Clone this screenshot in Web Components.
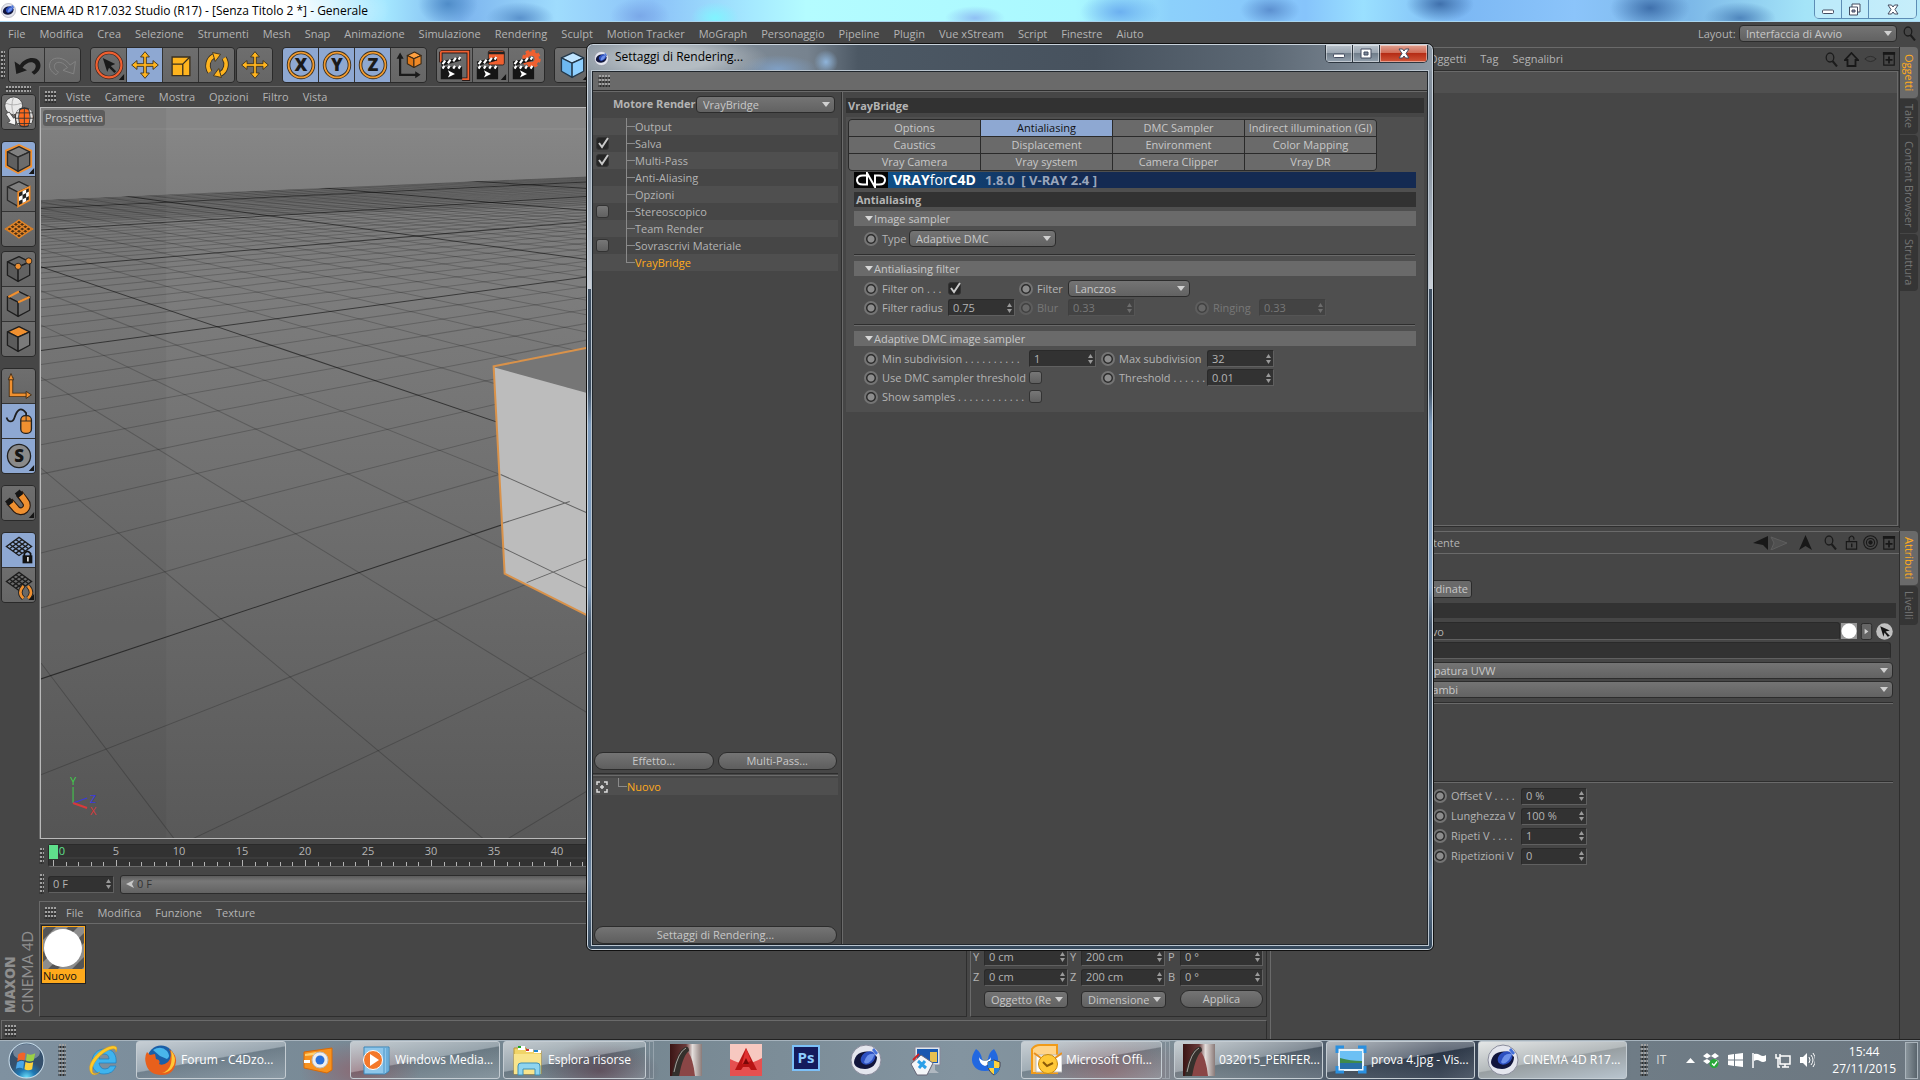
<!DOCTYPE html>
<html lang="it">
<head>
  <meta charset="UTF-8">
  <meta name="viewport" content="width=device-width, initial-scale=1.0">
  <title>CINEMA 4D R17.032 Studio (R17)</title>
  <style>
    html, body {
      height: 100%;
      margin: 0;
    }
    body {
      background: #464646;
      color: #b4b4b4;
      font: 11px/16px "Open Sans", "Noto Sans", sans-serif;
      overflow: hidden;
    }
  </style>
</head>
<body>
  <c4-desktop></c4-desktop>

  <template id="desktop">
    <style>
      :host { display: flex; flex-direction: column; height: 100vh; position: relative; }
      .menubar { display: flex; height: 23px; align-items: center; }
      .menubar c4-menu { flex: 1; }
      .menubar c4-combo { width: 199px; --lw: 41px; }
      .menubar c4-icon { margin: 0 3px 0 5px; }
      .work { flex: 1; display: flex; min-height: 0; }
      .left { flex: 1; display: flex; flex-direction: column; min-width: 0; }
      .right { flex: 0 0 649px; display: flex; flex-direction: column; gap: 3px; border-left: 1px solid #6a6a6a; padding-top: 2px; }
      .tools { display: flex; align-items: center; height: 41px; gap: 9px; box-sizing: border-box; padding-bottom: 2px; }
      .tools c4-grip { margin-right: -6px; }
      .tools .near { margin-left: -8px; }
      .body { flex: 1; display: flex; min-height: 0; }
      .side { flex: 0 0 36px; display: flex; flex-direction: column; gap: 11px; margin-right: 3px; padding-left: 1px; box-sizing: border-box; }
      .side c4-grip { margin: 0 0 -9px 4px; }
      .side .near { margin: -7px 0 0; }
      .brand { flex: 1; display: flex; align-items: flex-end; padding-bottom: 4px; color: #8e8e8e; }
      .brand span { writing-mode: vertical-rl; transform: rotate(180deg); line-height: 17px; font-size: 15px; font-family: Lato, sans-serif; }
      .brand b { font-family: "Open Sans", sans-serif; font-size: 14px; font-weight: 800; }
      .center { flex: 1; display: flex; flex-direction: column; min-width: 0; }
      c4-viewport { flex: 1; min-height: 0; }
      .bottom { display: flex; gap: 3px; height: 116px; }
      c4-materials { flex: 1; }
      c4-coords { flex: 0 0 297px; box-sizing: border-box; margin-right: 3px; }
      .status { height: 20px; margin: 3px 3px 0 1px; border: 1px solid #6a6a6a; border-right-color: #2e2e2e; border-bottom: 0; box-sizing: border-box; padding: 4px 2px; }
      c4-objects { flex: 481 0 0px; min-height: 0; }
      c4-attributes { flex: 509 0 0px; min-height: 0; }
      render-dialog { position: absolute; left: 586px; right: 486px; top: 43px; bottom: 129px; }
    </style>
    <title-bar></title-bar>
    <div class="menubar">
      <c4-menu style="padding-left: 1px">
        <button>File</button><button>Modifica</button><button>Crea</button><button>Selezione</button><button>Strumenti</button><button>Mesh</button><button>Snap</button><button>Animazione</button><button>Simulazione</button><button>Rendering</button><button>Sculpt</button><button>Motion Tracker</button><button>MoGraph</button><button>Personaggio</button><button>Pipeline</button><button>Plugin</button><button>Vue xStream</button><button>Script</button><button>Finestre</button><button>Aiuto</button>
      </c4-menu>
      <c4-combo label="Layout:" value="Interfaccia di Avvio"></c4-combo>
      <c4-icon name="search" size="15"></c4-icon>
    </div>
    <div class="work">
      <div class="left">
        <div class="tools">
          <c4-grip w="5" h="28"></c4-grip>
          <c4-tools items="undo redo"></c4-tools>
          <c4-tools items="select move* scale rotate"></c4-tools>
          <c4-tools class="near" items="move"></c4-tools>
          <c4-tools items="axisX* axisY* axisZ* world"></c4-tools>
          <c4-tools items="render renderView renderSet"></c4-tools>
          <c4-tools items="cube"></c4-tools>
        </div>
        <div class="body">
          <div class="side">
            <c4-grip w="26" h="6"></c4-grip>
            <c4-tools column items="convert"></c4-tools>
            <c4-tools column items="model* texture plane"></c4-tools>
            <c4-tools column class="near" items="points edges polys"></c4-tools>
            <c4-tools column items="axis mouse* solo*"></c4-tools>
            <c4-tools column items="magnet"></c4-tools>
            <c4-tools column items="gridLock* gridRot"></c4-tools>
            <div class="brand"><span><b>MAXON</b><br>CINEMA 4D</span></div>
          </div>
          <div class="center">
            <c4-viewport></c4-viewport>
            <c4-timeline></c4-timeline>
            <div class="bottom">
              <c4-materials></c4-materials>
              <c4-coords></c4-coords>
            </div>
          </div>
        </div>
        <div class="status"><c4-grip w="12" h="12"></c4-grip></div>
      </div>
      <div class="right">
        <c4-objects></c4-objects>
        <c4-attributes></c4-attributes>
      </div>
    </div>
    <task-bar></task-bar>
    <render-dialog></render-dialog>
  </template>

  <template id="title-bar">
    <style>
      :host {
        display: flex; height: 22px; box-sizing: border-box; border-bottom: 1px solid #a9d5ee; align-items: center; color: #000; font-size: 12px; padding: 0 3px 0 1px;
        background:
          radial-gradient(ellipse 250px 60px at 140px 10px, #fff 60%, #ffffff00),
          radial-gradient(ellipse 30px 22px at 448px 4px, #4f8cc8, #4f8cc800),
          radial-gradient(ellipse 34px 16px at 520px 18px, #5a92cc, #5a92cc00),
          radial-gradient(ellipse 30px 18px at 640px 16px, #7aa8e8, #7aa8e800),
          radial-gradient(ellipse 24px 16px at 715px 18px, #80f4ff, #80f4ff00),
          radial-gradient(ellipse 30px 12px at 975px 18px, #90c0f4, #90c0f400),
          radial-gradient(ellipse 40px 20px at 1120px 12px, #6cb0f0, #6cb0f000),
          radial-gradient(ellipse 30px 16px at 1270px 10px, #5c90d0, #5c90d000),
          radial-gradient(ellipse 34px 18px at 1440px 4px, #3f70ac, #3f70ac00),
          radial-gradient(ellipse 40px 22px at 1650px 8px, #3f70ac, #3f70ac00),
          radial-gradient(ellipse 36px 16px at 1740px 18px, #4f86bd, #4f86bd00),
          linear-gradient(90deg, #bfe3fb, #a5e8ff 20%, #7cb4ee 24%, #9fdcfd 29%, #8cc2f8 34%, #a4e8ff 39%, #b4fcff 42%, #aaf8ff 56%, #8cd0fb 61%, #86c4fb 68%, #9ae0ff 71%, #7cb8f4 76%, #8bc4fa 82%, #7cb8e8 88%, #a4e4f8 94%, #b4e8f8);
      }
      span { flex: 1; margin-left: 4px; }
      .btns { display: flex; align-self: flex-start; height: 18px; border: 1px solid #5d8db5; border-top: 0; border-radius: 0 0 5px 5px; }
      button { width: 27px; border: 0; border-right: 1px solid #5d8db5; background: #ffffff40; padding: 0; }
      button:last-child { width: 47px; border: 0; }
    </style>
    <c4-icon name="c4d" size="15"></c4-icon>
    <span>CINEMA 4D R17.032 Studio (R17) - [Senza Titolo 2 *] - Generale</span>
    <div class="btns">
      <button aria-label="Riduci"><c4-icon name="winMin" size="14"></c4-icon></button>
      <button aria-label="Ripristina"><c4-icon name="winRest" size="14"></c4-icon></button>
      <button aria-label="Chiudi"><c4-icon name="winClose" size="14"></c4-icon></button>
    </div>
  </template>

  <template id="viewport">
    <style>
      :host { display: flex; flex-direction: column; border: 1px solid #6a6a6a; border-right-color: #2e2e2e; border-bottom: 0; margin-right: 3px; }
      c4-menu { height: 20px; }
      .view { flex: 1; min-height: 0; position: relative; border: 1px solid #b9b9b9; border-width: 1px 0 1px 1px; overflow: hidden; background: linear-gradient(#868686 0, #868686 21px, #7c7c7c 100px, #7d7d7d 180px, #595959); }
      svg { position: absolute; width: 100%; height: 100%; }
      span { position: absolute; left: 2px; top: 2px; background: #5c5c5c; border-radius: 3px; padding: 0 2px; color: #c8c8c8; line-height: 16px; }
      text { font-size: 11px; }
    </style>
    <c4-menu grip>
      <button>Viste</button><button>Camere</button><button>Mostra</button><button>Opzioni</button><button>Filtro</button><button>Vista</button>
    </c4-menu>
    <div class="view">
      <svg viewBox="42 108 1226 729" preserveAspectRatio="xMinYMin slice"></svg>
      <span>Prospettiva</span>
    </div>
  </template>

  <template id="timeline">
    <style>
      :host { display: flex; flex-direction: column; padding: 5px 3px 7px 0; gap: 7px; }
      .row { display: flex; gap: 4px; align-items: center; }
      .ruler { flex: 1; height: 23px; background: #323232; border: 1px solid #2a2a2a; border-bottom-color: #6a6a6a; border-radius: 3px; box-sizing: border-box; }
      svg { display: block; overflow: visible; }
      text { font-size: 11px; fill: #b4b4b4; text-anchor: middle; }
      c4-field { width: 66px; --lw: 0px; --fw: 66px; }
      .slider { flex: 1; height: 17px; border: 1px solid #2c2c2c; border-radius: 3px; background: linear-gradient(#5c5c5c, #787878 30%, #636363); display: flex; align-items: center; gap: 3px; padding-left: 5px; color: #333; margin-left: 2px; }
    </style>
    <div class="row">
      <c4-grip w="5" h="16"></c4-grip>
      <div class="ruler"><svg width="1210" height="21"></svg></div>
    </div>
    <div class="row">
      <c4-grip w="5" h="20"></c4-grip>
      <c4-field name="Fotogramma" value="0 F"></c4-field>
      <div class="slider"><svg width="8" height="8"><path d="M0 4L8 0L6 4L8 8Z" fill="#c8c8c8"/></svg>0 F</div>
    </div>
  </template>

  <template id="materials">
    <style>
      :host { display: flex; flex-direction: column; border: 1px solid #6a6a6a; border-right-color: #2e2e2e; border-bottom-color: #2e2e2e; box-sizing: border-box; }
      c4-menu { height: 21px; border-bottom: 1px solid #6a6a6a; }
      figure { margin: 1px; width: 41px; border: 1px solid #222; background: #ffaa1c; padding: 1px; color: #111; line-height: 13px; }
      svg { display: block; }
    </style>
    <c4-menu grip><button>File</button><button>Modifica</button><button>Funzione</button><button>Texture</button></c4-menu>
    <figure>
      <svg width="41" height="42" viewBox="0 0 41 42">
        <path fill="#8d8d8d" d="M0 0h41v42H0z"/>
        <path stroke="#555" stroke-width="7" d="M-4 12L14-6M-4 34L34-4M6 46L46 6M28 48L46 30"/>
        <circle cx="20" cy="21" r="19" fill="#fff"/>
      </svg>
      <figcaption>Nuovo</figcaption>
    </figure>
  </template>

  <template id="coords">
    <style>
      :host { display: block; border: 1px solid #6a6a6a; border-right-color: #2e2e2e; border-bottom-color: #2e2e2e; padding: 46px 5px 0 2px; overflow: hidden; }
      .grid { display: grid; grid-template-columns: 97px 98px auto; row-gap: 2px; }
      c4-field { --lw: 11px; --fw: 84px; }
      c4-field:nth-child(3n) { --lw: 12px; --fw: 83px; }
      c4-combo { margin: 2px 2px 0 11px; }
      c4-button { margin: 2px 0 0 12px; }
    </style>
    <div class="grid">
      <c4-field label="Y" value="0 cm"></c4-field>
      <c4-field label="Y" value="200 cm"></c4-field>
      <c4-field label="P" value="0 °"></c4-field>
      <c4-field label="Z" value="0 cm"></c4-field>
      <c4-field label="Z" value="200 cm"></c4-field>
      <c4-field label="B" value="0 °"></c4-field>
      <c4-combo name="Sistema" value="Oggetto (Rel)"></c4-combo>
      <c4-combo name="Misura" value="Dimensione"></c4-combo>
      <c4-button>Applica</c4-button>
    </div>
  </template>

  <template id="objects">
    <style>
      :host { display: flex; }
      .panel { flex: 1; display: flex; flex-direction: column; border-top: 1px solid #6a6a6a; border-bottom: 1px solid #2e2e2e; margin-bottom: 1px; }
      .bar { display: flex; height: 22px; align-items: center; justify-content: space-between; padding: 0 3px 0 151px; border-bottom: 1px solid #2e2e2e; }
      .icons { display: flex; gap: 5px; }
      .list { flex: 1; border-top: 1px solid #6a6a6a; border-right: 1px solid #6a6a6a; border-bottom: 1px solid #6a6a6a; margin-right: 1px; background: linear-gradient(#505050 21px, #464646 21px); }
    </style>
    <div class="panel">
      <div class="bar">
        <c4-menu><button>Oggetti</button><button>Tag</button><button>Segnalibri</button></c4-menu>
        <div class="icons"><c4-icon name="search" size="15"></c4-icon><c4-icon name="home" size="15"></c4-icon><c4-icon name="eye" size="13"></c4-icon><c4-icon name="plus" size="14"></c4-icon></div>
      </div>
      <div class="list"></div>
    </div>
    <c4-rail items="Oggetti*51 Take*35 Content_Browser*98 Struttura*57"></c4-rail>
  </template>

  <template id="attributes">
    <style>
      :host { display: flex; }
      .panel { flex: 1; display: flex; flex-direction: column; border-top: 1px solid #6a6a6a; min-width: 0; }
      .bar { display: flex; height: 21px; align-items: center; justify-content: space-between; padding: 0 3px 0 147px; border-bottom: 1px solid #6a6a6a; }
      .icons { display: flex; gap: 4px; align-items: center; }
      .wide { margin-left: 6px; }
      .lock { margin-left: 2px; }
      .content { padding: 26px 6px 0 120px; display: flex; flex-direction: column; }
      .tab { align-self: flex-start; height: 18px; width: 81px; box-sizing: border-box; font: inherit; line-height: 14px; padding: 0 3px; text-align: right; color: #c8c8c8; background: #6a6a6a; border: 1px solid #2a2a2a; border-radius: 3px; }
      .head { height: 15px; background: #323232; margin: 5px -3px 4px 0; }
      .link { display: flex; align-items: center; gap: 1px; }
      input { flex: 1; min-width: 0; height: 18px; box-sizing: border-box; border: 1px solid #2a2a2a; border-bottom-color: #606060; border-radius: 3px; background: #323232; color: #b4b4b4; font: inherit; padding: 0 18px; }
      .tex { flex: none; height: 17px; margin: 2px 2px 2px 0; }
      c4-combo { margin: 0 0 1px; --cp: 19px; }
      hr { border: 0; border-top: 1px solid #2e2e2e; border-bottom: 1px solid #6a6a6a; margin: 3px 0 77px; width: 100%; }
      .rows { margin: 4px 0 0 42px; display: grid; gap: 2px; --lw: 70px; --fw: 66px; }
      hr.low { margin: 0; }
    </style>
    <div class="panel">
      <div class="bar">
        <c4-menu><button>Utente</button></c4-menu>
        <div class="icons"><c4-icon name="back" size="35"></c4-icon><c4-icon class="wide" name="up" size="15"></c4-icon><c4-icon class="wide" name="search" size="15"></c4-icon><c4-icon class="lock" name="lock" size="15"></c4-icon><c4-icon name="target" size="15"></c4-icon><c4-icon name="plus" size="14"></c4-icon></div>
      </div>
      <div class="content">
        <button class="tab">Coordinate</button>
        <div class="head"></div>
        <div class="link"><input aria-label="Materiale" value="Nuovo"><c4-icon name="sphere" size="16"></c4-icon><c4-icon name="next" size="17"></c4-icon><c4-icon name="pick" size="17"></c4-icon></div>
        <input class="tex" aria-label="Selezione">
        <c4-combo name="Proiezione" value="Mappatura UVW"></c4-combo>
        <c4-combo name="Lato" value="Entrambi"></c4-combo>
        <hr>
        <hr class="low">
        <div class="rows">
          <c4-field knob label="Offset V . . . ." value="0 %"></c4-field>
          <c4-field knob label="Lunghezza V" value="100 %"></c4-field>
          <c4-field knob label="Ripeti V . . . ." value="1"></c4-field>
          <c4-field knob label="Ripetizioni V" value="0"></c4-field>
        </div>
      </div>
    </div>
    <c4-rail items="Attributi*54 Livelli*39"></c4-rail>
  </template>

  <template id="dialog">
    <style>
      :host {
        display: flex; flex-direction: column; box-sizing: border-box; border: 1px solid #111; border-radius: 7px 7px 6px 6px; padding: 0 5px 5px; box-shadow: inset 0 0 0 1px #c9d3dc;
        background: linear-gradient(#8f9aa6, #76828f 9%, #a8b2be 20%, #c9ced6 27%, #405062 27%, #405062 38%, #7d9bbd 42%, #7d9bbd 60%, #4b5c70 64%, #3a4a5a 80%, #6b84a0 92%, #34475a);
      }
      header { display: flex; height: 26px; align-items: center; margin: 1px -4px 0; padding: 0 4px 0 6px; color: #000; font-size: 12px; line-height: 14px; border-radius: 6px 6px 0 0;
        background: radial-gradient(ellipse 100px 26px at 80px 14px, #b4bcc2 40%, #b4bcc200), radial-gradient(circle 12px at 238px 17px, #8fb4da, #8fb4da00), radial-gradient(ellipse 40px 14px at 190px 24px, #7f9fc4, #7f9fc400), linear-gradient(90deg, #8a95a0, #77838f 26%, #4c5864 32%, #47525e 60%, #5c6874 80%, #8d98a4); }
      header span { flex: 1; margin: 0 0 2px 6px; }
      .btns { display: flex; align-self: flex-start; height: 17px; border: 1px solid #2d3640; border-top: 0; border-radius: 0 0 5px 5px; overflow: hidden; }
      .btns button { width: 27px; border: 0; border-right: 1px solid #2d3640; background: linear-gradient(#b9c2cb, #98a3ae 50%, #717e8b 50%, #93a0ad); padding: 0; box-shadow: inset 0 0 0 1px #ffffff70; }
      .btns button:last-child { width: 47px; border: 0; background: linear-gradient(#e0a090, #cf6a55 48%, #b52c15 50%, #d0563a); }
      main { flex: 1; min-height: 0; display: flex; flex-direction: column; border: 1px solid #20262c; outline: 1px solid #b9c4ce; background: #464646; }
      .strip { height: 18px; background: #6a6a6a; border-bottom: 1px solid #2e2e2e; padding-left: 5px; display: flex; align-items: center; }
      .cols { flex: 1; min-height: 0; display: flex; border-top: 1px solid #6a6a6a; }
      .nav { flex: 0 0 249px; display: flex; flex-direction: column; border-right: 1px solid #2e2e2e; box-sizing: border-box; padding-right: 3px; }
      .engine { margin: 3px 3px 5px 20px; --lw: 83px; --lb: bold; }
      ul { list-style: none; margin: 0; padding: 0; }
      li { display: flex; height: 17px; align-items: center; }
      li:nth-child(odd) { background: #4f4f4f; }
      li c4-check { width: 33px; padding-left: 3px; box-sizing: border-box; }
      li i { align-self: stretch; width: 9px; border-left: 1px solid #8a8a8a; box-sizing: border-box; background: linear-gradient(#8a8a8a, #8a8a8a) 0 8px / 100% 1px no-repeat; }
      li:last-child i { border-image: linear-gradient(#8a8a8a 9px, transparent 9px) 1; }
      li.on { color: #ffaa1c; }
      .grow { flex: 481 0 0px; }
      .grow.small { flex-grow: 131; }
      .two { display: grid; grid-template-columns: 1fr 1fr; gap: 4px; padding: 0 1px 3px; }
      .line { height: 1px; border-top: 1px solid #2e2e2e; border-bottom: 1px solid #6a6a6a; margin-bottom: 2px; }
      .preset i { width: 9px; margin: 0 0 0 10px; }
      .preset c4-icon { margin-left: 3px; }
      .view { flex: 1; min-width: 0; border-left: 1px solid #6a6a6a; padding: 6px 3px 0 3px; }
      h2, h3, h4 { margin: 0; font-size: 11px; line-height: 15px; height: 15px; background: #323232; }
      h2 { padding-left: 2px; margin-bottom: 4px; }
      h3 { padding-left: 2px; margin: 4px 0; }
      h4 { background: #6a6a6a; color: #c8c8c8; font-weight: normal; padding-left: 11px; display: flex; align-items: center; gap: 1px; }
      h4::before { content: ""; border: 4px solid transparent; border-top: 5px solid #d8d8d8; border-bottom: 0; }
      .box { background: #4f4f4f; padding: 2px 0 6px 2px; }
      .tabs { display: grid; grid-template-columns: repeat(4, 131px); gap: 1px; width: max-content; background: #2a2a2a; border: 1px solid #2a2a2a; border-radius: 4px; overflow: hidden; }
      .tabs button { height: 16px; border: 0; padding: 0; background: #6a6a6a; color: #c8c8c8; font: inherit; line-height: 16px; white-space: nowrap; }
      .tabs button.on { background: #8ea8d2; color: #111; }
      .in { margin: 1px 8px 0 6px; }
      .banner { display: flex; align-items: center; height: 16px; background: linear-gradient(90deg, #0f4f87 34px, #142a52 220px); color: #9aa6bc; font: bold 13px/16px "Open Sans", sans-serif; white-space: pre; }
      .banner c4-icon { margin-right: 5px; }
      .banner em { font-style: normal; font-size: 14px; color: #fff; margin-right: 9px; }
      .banner em span { font-weight: normal; }
      .rows { display: grid; padding: 3px 0 0 10px; grid-auto-rows: 19px; align-items: center; }
      .sampler { --lw: 27px; grid-template-columns: 192px; }
      .filter { grid-template-columns: 155px 176px auto; --fw: 67px; --lw: 66px; padding-bottom: 1px; }
      .filter .c2 { --lw: 31px; }
      .filter .c3 { --lw: 46px; }
      .filter c4-combo { width: 171px; }
      .dmc { grid-template-columns: 237px auto; --lw: 147px; --fw: 67px; }
      .dmc .c2 { --lw: 88px; }
      .sep { border-top: 1px solid #2e2e2e; border-bottom: 1px solid #6a6a6a; margin: 6px 1px 5px 0; }
    </style>
    <header>
      <c4-icon name="c4d" size="15"></c4-icon>
      <span>Settaggi di Rendering...</span>
      <div class="btns">
        <button aria-label="Riduci"><c4-icon name="winMin" size="14"></c4-icon></button>
        <button aria-label="Ingrandisci"><c4-icon name="winMax" size="14"></c4-icon></button>
        <button aria-label="Chiudi"><c4-icon name="winClose" size="14"></c4-icon></button>
      </div>
    </header>
    <main>
      <div class="strip"><c4-grip w="12" h="12"></c4-grip></div>
      <div class="cols">
        <div class="nav">
          <c4-combo class="engine" label="Motore Render" value="VrayBridge"></c4-combo>
          <ul>
            <li><c4-check hide></c4-check><i></i>Output</li>
            <li><c4-check name="Salva" checked></c4-check><i></i>Salva</li>
            <li><c4-check name="Multi-Pass" checked></c4-check><i></i>Multi-Pass</li>
            <li><c4-check hide></c4-check><i></i>Anti-Aliasing</li>
            <li><c4-check hide></c4-check><i></i>Opzioni</li>
            <li><c4-check name="Stereoscopico"></c4-check><i></i>Stereoscopico</li>
            <li><c4-check hide></c4-check><i></i>Team Render</li>
            <li><c4-check name="Sovrascrivi Materiale"></c4-check><i></i>Sovrascrivi Materiale</li>
            <li class="on"><c4-check hide></c4-check><i></i>VrayBridge</li>
          </ul>
          <div class="grow"></div>
          <div class="two"><c4-button>Effetto...</c4-button><c4-button>Multi-Pass...</c4-button></div>
          <div class="line"></div>
          <ul class="preset"><li class="on"><c4-icon name="focus" size="12"></c4-icon><i></i>Nuovo</li></ul>
          <div class="grow small"></div>
          <c4-button style="margin: 0 1px">Settaggi di Rendering...</c4-button>
        </div>
        <div class="view">
          <h2>VrayBridge</h2>
          <div class="box">
            <div class="tabs">
              <button>Options</button><button class="on">Antialiasing</button><button>DMC Sampler</button><button>Indirect illumination (GI)</button>
              <button>Caustics</button><button>Displacement</button><button>Environment</button><button>Color Mapping</button>
              <button>Vray Camera</button><button>Vray system</button><button>Camera Clipper</button><button>Vray DR</button>
            </div>
            <div class="in">
              <div class="banner"><c4-icon name="cnd" size="34"></c4-icon><em>VRAY<span>for</span>C4D</em>1.8.0  [ V-RAY 2.4 ]</div>
              <h3>Antialiasing</h3>
              <h4>Image sampler</h4>
              <div class="rows sampler"><c4-combo knob label="Type" value="Adaptive DMC"></c4-combo></div>
              <div class="sep"></div>
              <h4>Antialiasing filter</h4>
              <div class="rows filter">
                <c4-check knob label="Filter on . . ." checked></c4-check>
                <c4-combo class="c2" knob label="Filter" value="Lanczos"></c4-combo>
                <span></span>
                <c4-field knob label="Filter radius" value="0.75"></c4-field>
                <c4-field class="c2" knob off label="Blur" value="0.33"></c4-field>
                <c4-field class="c3" knob off label="Ringing" value="0.33"></c4-field>
              </div>
              <div class="sep"></div>
              <h4>Adaptive DMC image sampler</h4>
              <div class="rows dmc">
                <c4-field knob label="Min subdivision . . . . . . . . . ." value="1"></c4-field>
                <c4-field class="c2" knob label="Max subdivision" value="32"></c4-field>
                <c4-check knob label="Use DMC sampler threshold"></c4-check>
                <c4-field class="c2" knob label="Threshold . . . . . ." value="0.01"></c4-field>
                <c4-check knob label="Show samples . . . . . . . . . . . ."></c4-check>
              </div>
            </div>
          </div>
        </div>
      </div>
    </main>
  </template>

  <template id="taskbar">
    <style>
      :host { display: flex; align-items: center; height: 40px; box-sizing: border-box; border-top: 1px solid #a6b3bd; outline: 1px solid #222; color: #fff; font-size: 12px; padding: 0 2px 1px 8px;
        background: radial-gradient(ellipse 60px 30px at 360px 30px, #8a6a74, transparent), radial-gradient(ellipse 60px 30px at 600px 30px, #5a4a58, transparent), radial-gradient(ellipse 80px 40px at 1110px 30px, #8a7078, transparent), linear-gradient(90deg, #7f91a0, #74858f 30%, #8394a0 50%, #7e8d96 62%, #2e3a4c 75%, #6f7c86 85%, #6c7780 100%); }
      .start { border: 0; padding: 0; background: none; }
      .q1 { margin: 0 16px 0 22px; }
      .q2 { margin: 0 16px; }
      .more { width: 3px; height: 36px; border: 1px solid #c8d0d666; border-left: 0; }
      .apps { display: flex; gap: 28px; margin: 0 19px 0 16px; }
      .tray { display: flex; align-items: center; margin-left: auto; }
      .tray c4-icon { margin-left: 8px; }
      .it { margin-right: 12px; color: #ddd; }
      .clock { text-align: center; line-height: 17px; margin: 0 9px 0 17px; }
      .show { width: 13px; height: 37px; padding: 0; border: 1px solid #aab4bb; background: linear-gradient(90deg, #8a959c, #59646c); }
    </style>
    <button class="start" aria-label="Start"><c4-icon name="start" size="37"></c4-icon></button>
    <c4-grip w="8" h="32" style="margin-left: 13px"></c4-grip>
    <c4-icon class="q1" name="ie" size="32"></c4-icon>
    <task-button icon="firefox" style="width: 150px">Forum - C4Dzo...</task-button>
    <c4-icon class="q2" name="camera" size="32"></c4-icon>
    <task-button icon="wmp" style="width: 150px; margin-right: 3px">Windows Media...</task-button>
    <task-button icon="folder" style="width: 143px">Esplora risorse</task-button>
    <span class="more"></span><span class="more"></span>
    <div class="apps">
      <c4-icon name="archicad" size="32"></c4-icon><c4-icon name="autocad" size="32"></c4-icon><c4-icon name="ps" size="32"></c4-icon><c4-icon name="c4d" size="32"></c4-icon><c4-icon name="remote" size="32"></c4-icon><c4-icon name="malware" size="32"></c4-icon>
    </div>
    <task-button icon="outlook" style="width: 141px">Microsoft Offi...</task-button>
    <span class="more"></span><span class="more"></span>
    <task-button icon="archicad" style="width: 149px; margin: 0 3px 0 4px">032015_PERIFER...</task-button>
    <task-button icon="photo" style="width: 149px; margin-right: 3px">prova 4.jpg - Vis...</task-button>
    <task-button icon="c4d" on style="width: 149px">CINEMA 4D R17...</task-button>
    <c4-grip w="8" h="32" style="margin-left: 13px"></c4-grip>
    <div class="tray">
      <span class="it">IT</span>
      <c4-icon name="tri" size="9"></c4-icon><c4-icon name="dropbox" size="16"></c4-icon><c4-icon name="win" size="16"></c4-icon><c4-icon name="flag" size="16"></c4-icon><c4-icon name="net" size="16"></c4-icon><c4-icon name="vol" size="16"></c4-icon>
      <div class="clock">15:44<br>27/11/2015</div>
      <button class="show" aria-label="Mostra desktop"></button>
    </div>
  </template>

  <script>
    const cube = (top, side, front, line, w = 1.5) => `
      <g stroke="${line}" stroke-width="${w}" stroke-linejoin="round">
        <path fill="${top}" d="M5 10L18 4L30 10L17 16Z"/>
        <path fill="${side}" d="M5 10L17 16V32L5 25Z"/>
        <path fill="${front}" d="M17 16L30 10V25L17 32Z"/>
      </g>`
    const arrows = '<path d="M18 3l5 6h-3.500v7.500H27V13l6 5-6 5v-3.500h-7.500V27H23l-5 6-5-6h3.500v-7.500H9V23l-6-5 6-5v3.500h7.500V9H13z" fill="#ffb41e" stroke="#3a3020"/>'
    const axisBtn = (l) => `<circle cx="18" cy="18" r="14" fill="none" stroke="#3a3020" stroke-width="4"/><circle cx="18" cy="18" r="14" fill="none" stroke="#f09a30" stroke-width="2"/><text x="18" y="25" text-anchor="middle" font-size="20" font-weight="800" font-family="Open Sans" fill="#1a1a1a">${l}</text>`
    const clapper = `<path d="M2 20h24v14H2z" fill="#151515"/><path d="M2 14l22-5 1 4-22 6z" fill="#151515"/><path d="M4 17l3-4M10 16l3-4M16 14l3-4M22 12l2-3M4 22l2-3M10 22l2-3M16 22l2-3M22 22l2-3" stroke="#fff" stroke-width="2.500"/><path d="M10 24l8 4-8 4 2-4z" fill="#fff"/>`
    const lattice = (c) => `<g transform="translate(18 14) scale(1 .72)"><g transform="rotate(45)" fill="none" stroke="${c}" stroke-width="1.800"><rect x="-10" y="-10" width="20" height="20"/><path d="M-5-10v20M0-10v20M5-10v20M-10-5h20M-10 0h20M-10 5h20"/></g></g>`
    const corner = '<path d="M35 28v7h-6z" fill="#151515"/>'
    const undoPath = 'M4 14l2 14 12-4-5-3c4-6 11-8 14-4 2 3 0 7-4 9l3 3c6-4 9-9 6-15-4-6-16-5-22 4z'

    // name: [viewBox width, height, markup]
    const icons = {
      undo: [36, 36, `<path d="${undoPath}" fill="#1c1c1c"/>`],
      redo: [36, 36, `<path d="${undoPath}" transform="matrix(-1 0 0 1 36 0)" fill="none" stroke="#868686"/>`],
      select: [36, 36, '<circle cx="18" cy="18" r="14" fill="none" stroke="#3a2420" stroke-width="4"/><circle cx="18" cy="18" r="14" fill="none" stroke="#f06030" stroke-width="2.500"/><path d="M11 10l14 7-5 2 6 6-2 2-6-6-2 5z" fill="#1a1a1a"/>' + corner],
      move: [36, 36, arrows],
      scale: [36, 36, '<path d="M8 9h20v21H8z" fill="#ffb41e" stroke="#3a3020" stroke-width="1.500"/><path d="M8 17h12v13M20 17l8-8" fill="none" stroke="#3a3020" stroke-width="1.500"/>'],
      rotate: [36, 36, '<g fill="none" stroke="#3a3020" stroke-width="6"><path d="M10 26a11 12 0 0 1 4-18M26 10a11 12 0 0 1-4 18"/></g><g fill="none" stroke="#ffb41e" stroke-width="4"><path d="M10 26a11 12 0 0 1 4-18M26 10a11 12 0 0 1-4 18"/></g><path d="M13 4l9 2-6 8zM23 32l-9-2 6-8z" fill="#ffb41e" stroke="#3a3020"/>'],
      axisX: [36, 36, axisBtn('X')],
      axisY: [36, 36, axisBtn('Y')],
      axisZ: [36, 36, axisBtn('Z')],
      world: [36, 36, `<path d="M8 30V9M7 29h20" stroke="#1a1a1a" stroke-width="2.500"/><path d="M4 11l4-7 4 7zM25 25l6 4-6 4z" fill="#1a1a1a"/><g transform="translate(13 1) scale(.62)">${cube('#ffa040', '#e07818', '#f08a28', '#3a2a18', 2)}</g>`],
      render: [36, 36, '<path d="M2 3h31v31H26M2 3v12" fill="none" stroke="#2a1a18" stroke-width="4"/><path d="M2 3h31v31H26M2 3v12" fill="none" stroke="#f06030" stroke-width="2"/>' + clapper],
      renderView: [36, 36, '<rect x="15" y="2" width="18" height="16" rx="2" fill="#f06030" stroke="#222"/><path d="M15 3h18v3H15z" fill="#222"/>' + clapper + corner],
      renderSet: [36, 36, '<circle cx="23" cy="11" r="6" fill="none" stroke="#f06030" stroke-width="5"/><circle cx="23" cy="11" r="9" fill="none" stroke="#f06030" stroke-width="3" stroke-dasharray="4 3.070"/>' + clapper],
      cube: [36, 36, cube('#bfe4ff', '#6db8f0', '#8fd0ff', '#24384a') + corner],
      convert: [36, 36, '<circle cx="12" cy="11" r="10" fill="#e8e8e8" stroke="#444"/><path d="M3 8q9 4 18 0M12 1q-4 10 0 20" fill="none" stroke="#aaa"/><path d="M3 20l4-2 5 7 3-2-1 10-9-3 3-2z" fill="#f4f4f4" stroke="#444"/><ellipse cx="24" cy="24" rx="10" ry="10.500" fill="#ff6a1e" stroke="#333" stroke-width="1.500"/><path d="M16 17q-3 7 0 14l3 3q-2-9 0-20zM32 17q3 7 0 14l-3 3q2-9 0-20z" fill="#ddd"/><path d="M15 19h18M14 25h20M16 31h16M19 14q-3 10 0 20M24 13v22M29 14q3 10 0 20" fill="none" stroke="#333"/>'],
      model: [36, 36, '<path d="M4 9L18 3L31 9V26L17 33L4 26Z" fill="none" stroke="#f09030" stroke-width="3.500"/>' + cube('#808080', '#606060', '#6c6c6c', '#2a2a2a') + corner],
      texture: [36, 36, cube('#808080', '#6c6c6c', '#fff', '#2a2a2a') + '<path d="M18 16l4-2v5l-4 2zM26 12l4-2v5l-4 2zM22 19l4-2v5l-4 2zM18 26l4-2v5l-4 2zM26 22l4-2v4l-4 2z" fill="#222"/><path d="M17 16l13-6v15l-13 7z" fill="none" stroke="#f09030" stroke-width="2"/>'],
      plane: [36, 36, `<path d="M2 18L18 8L34 18L18 28Z" fill="#4a2f14" stroke="#e08428"/><g transform="translate(0 4)">${lattice('#e08428')}</g>`],
      points: [36, 36, cube('#666', '#5a5a5a', '#626262', '#1e1e1e') + '<g fill="#f09030" stroke="#222"><circle cx="17" cy="15" r="3.500"/><circle cx="29" cy="9" r="3.500"/></g>'],
      edges: [36, 36, cube('#707070', '#606060', '#6c6c6c', '#1e1e1e') + '<path d="M6 10l12-6M17 16l13-6" stroke="#f09030" stroke-width="2.500"/>'],
      polys: [36, 36, cube('#f09030', '#5c5c5c', '#7a7a7a', '#1e1e1e')],
      axis: [36, 36, '<path d="M9 8v20h19" fill="none" stroke="#3a2a18" stroke-width="5"/><path d="M9 6v22h20" fill="none" stroke="#f09030" stroke-width="3"/><path d="M6 11l3-7 3 7zM26 24l6 4-6 4z" fill="#f09030" stroke="#3a2a18"/>'],
      mouse: [36, 36, '<path d="M4 14c2 6 7 6 9 0s6-14 13-5v4" fill="none" stroke="#1e1e1e" stroke-width="2"/><rect x="20" y="12" width="12" height="20" rx="5" fill="#f09030" stroke="#222" stroke-width="1.500"/><path d="M20 18h12M26 12v6" stroke="#222"/>'],
      solo: [36, 36, '<circle cx="18" cy="18" r="13" fill="#8a8a8a" stroke="#222" stroke-width="1.500"/><text x="18" y="25" text-anchor="middle" font-size="19" font-weight="800" font-family="Open Sans" fill="#151515">S</text>' + corner],
      magnet: [36, 36, '<g fill="none"><path d="M7 16l8 9a6 6 0 0 0 10-9l-7-9" stroke="#2a1a10" stroke-width="9"/><path d="M9 18l6 7a6 6 0 0 0 10-9l-5-7" stroke="#f09030" stroke-width="6.500"/><path d="M5 14l4 5M16 5l4 5" stroke="#151515" stroke-width="7"/></g>' + corner],
      gridLock: [36, 36, lattice('#1c1c1c') + '<rect x="22" y="24" width="11" height="9" fill="#111"/><path d="M24 25v-3q3.500-5 7 0v3" fill="none" stroke="#111" stroke-width="2"/><path d="M27 26h2v5h-2z" fill="#ddd"/>'],
      gridRot: [36, 36, lattice('#1c1c1c') + '<path d="M23 33q-7-6 0-14M28 33q7-6 0-14" fill="none" stroke="#222" stroke-width="5"/><path d="M23 33q-7-6 0-14M28 33q7-6 0-14" fill="none" stroke="#f09030" stroke-width="3"/>' + corner],
      search: [15, 15, '<ellipse cx="6" cy="5.500" rx="3.800" ry="4.500" fill="none" stroke="#1c1c1c" stroke-width="1.300"/><path d="M8.500 9l4.500 5.500" stroke="#1c1c1c" stroke-width="2"/>'],
      home: [15, 15, '<path d="M7.500 1L14 8h-2.500v6h-8V8H1z" fill="none" stroke="#181818" stroke-width="1.800"/>'],
      eye: [15, 15, '<path d="M1 8q6.500-6 13 0q-6.500 6-13 0z" fill="none" stroke="#2a2a2a"/>'],
      plus: [14, 16, '<path d="M1 2h12v13H1z" fill="none" stroke="#181818" stroke-width="1.300"/><path d="M0 0h14v3H0zM6 5h2v8H6zM3 8h8v2H3z" fill="#181818"/>'],
      back: [35, 14, '<path d="M0 7L15 0V14L10 9z" fill="#181818"/><path d="M18 1l16 6-16 7 3-7z" fill="#505050" stroke="#5e5e5e"/>'],
      up: [13, 15, '<path d="M6.500 0L13 15l-6.500-4L0 15z" fill="#181818"/>'],
      lock: [13, 16, '<path d="M1 7h11v8H1zM4 7V3q3-4 5 0v2" fill="none" stroke="#181818" stroke-width="1.200"/><path d="M6 9h1.500v4H6z" fill="#181818"/>'],
      target: [14, 14, '<g fill="none" stroke="#181818"><circle cx="7" cy="7" r="6.300"/><circle cx="7" cy="7" r="3.800"/></g><circle cx="7" cy="7" r="2" fill="#181818"/>'],
      sphere: [16, 16, '<path d="M0 0h16v16H0z" fill="#999"/><circle cx="8" cy="8" r="7.500" fill="#fff"/>'],
      next: [12, 18, '<rect x=".5" y=".5" width="11" height="17" rx="2" fill="#666" stroke="#2a2a2a"/><path d="M4 6l4 3-4 3z" fill="#d0d0d0"/>'],
      pick: [16, 16, '<circle cx="8" cy="8" r="7.800" fill="#c0c0c0"/><path d="M4 3l9 4-4 1 4 4-2 1-3-4-1 4z" fill="#151515"/>'],
      focus: [12, 12, '<path d="M1 4V1h3M8 1h3v3M11 8v3H8M4 11H1V8M6 4v4M4 6h4" fill="none" stroke="#ddd" stroke-width="1.500"/>'],
      winMin: [14, 14, '<rect x="1.500" y="7" width="11" height="3.500" rx="1" fill="#fff" stroke="#444c60"/>'],
      winMax: [14, 14, '<path d="M2 2h10v9H2z" fill="#fff" stroke="#444c60"/><path d="M5 5h4v3H5z" fill="#7b8798" stroke="#444c60"/>'],
      winRest: [14, 14, '<path d="M4 1h8v8H4z" fill="#fff" stroke="#444c60"/><path d="M1.500 4h8v8h-8z" fill="#fff" stroke="#444c60"/><path d="M4 7h3v2H4z" fill="#99b" stroke="#444c60"/>'],
      winClose: [14, 14, '<path d="M2 2h3.500L7 4l1.500-2H12L9 6.500 12 11H8.500L7 9l-1.500 2H2l3-4.500z" fill="#fff" stroke="#444c60"/>'],
      c4d: [32, 32, '<circle cx="16" cy="16" r="15" fill="#e4e6ee" stroke="#8a8c9c"/><path d="M4 18C5 9 13 6 22 8l5 5c0 7-5 12-12 12C8 25 4 22 4 18z" fill="#11153c"/><ellipse cx="18" cy="14" rx="8" ry="6" transform="rotate(-35 18 14)" fill="#2c4fc0"/><path d="M14 18q2 4 8-2l3-6q-8-2-11 8z" fill="#6c90ea"/><path d="M24 4l4 5-2 2-4-5z" fill="#4470d8"/>'],
      cnd: [34, 16, '<path d="M0 0h34v16H0z" fill="#050505"/><g fill="none" stroke="#fff" stroke-width="2"><path d="M14 3.500H9q-6 0-6 4.500t6 4.500h4V1l8 14V3.500h4q6 0 6 4.500t-6 4.500h-5"/></g>'],
      start: [36, 36, '<defs><radialGradient id="g" cy="1"><stop offset="0" stop-color="#6fe6ff"/><stop offset=".5" stop-color="#1e78b4"/><stop offset="1" stop-color="#35506c"/></radialGradient></defs><circle cx="18" cy="18" r="17" fill="url(#g)" stroke="#c8dcea"/><ellipse cx="18" cy="10" rx="13" ry="8" fill="#fff" opacity=".3"/><path d="M10 12q4-3 7-1l-1 7q-4-2-7 1z" fill="#f0642a"/><path d="M18.500 11.500q4 2 8-.500l-1.500 7q-4 2-7.500 0z" fill="#9ad046"/><path d="M8.700 20q4-3 7-1l-1 7q-3-2-7 0z" fill="#4aa6e8"/><path d="M17 19.500q4 2 7.500 0l-1 7q-4 2-7.500 0z" fill="#ffd23c"/>'],
      ie: [32, 32, '<path d="M28 19H11q1 6 6 6 4 0 5-3h6q-3 8-12 8C8 30 4 25 4 18S9 5 17 5s12 6 11 14zM11 15h10q0-5-5-5t-5 5z" fill="#3fb4ee" stroke="#1c7fc0" stroke-width=".7"/><path d="M3 29C-3 20 12 4 24 2q7-1 4 6 0-4-4-3C14 7 1 22 5 29q3 2 7-1-6 5-9 1z" fill="#ffc928" stroke="#d89a10" stroke-width=".5"/>'],
      firefox: [32, 32, '<circle cx="16" cy="15" r="13.500" fill="#1a5fa8"/><path d="M8 6q8-5 14 1 4 5 0 8l-7-3z" fill="#49b6ec"/><path d="M2 8l3 3 5-1 1 5q5 1 3 5 4 2 9-2 5-6 1-13 8 6 7 13-2 13-14 13Q4 31 1 20-1 13 2 8z" fill="#e8601c"/><path d="M26 6q6 8 3 15-4 8-12 8 12-3 9-23z" fill="#ffc838"/>'],
      camera: [32, 32, '<path d="M2 8l28-4v22l-5 3-23-5z" fill="#f8921e" stroke="#d86a08"/><path d="M3 10l11-2v3L3 12z" fill="#ffd070"/><circle cx="18" cy="16" r="8" fill="#eee" stroke="#bbb"/><circle cx="18" cy="16" r="4.500" fill="#2a70d8"/><path d="M2 16h6v3H2z" fill="#fff"/>'],
      wmp: [32, 32, '<path d="M5 3h25v24l-4 3H5z" fill="#8ec6ea" stroke="#3a86b8"/><path d="M25 4v25M28 4v24" stroke="#4a96c8"/><circle cx="14" cy="16" r="9.500" fill="#f4782a" stroke="#fff"/><path d="M11 10l9 6-9 6z" fill="#fff"/>'],
      folder: [32, 32, '<path d="M2 4h12l2 3h13v23H2z" fill="#f0d468" stroke="#b89838"/><path d="M6 2h7v4H6zM14 5h7v3h-7zM22 6h7v3h-7z" fill="#fff"/><path d="M6 2h3v2H6z" fill="#2a2"/><path d="M14 5h3v2h-3z" fill="#c33"/><path d="M22 6h4v2h-4z" fill="#28c"/><path d="M2 10h27v20H2z" fill="#f8e48c"/><path d="M6 31v-9q0-3 3-3h16q3 0 3 3v9h-5v-6H11v6z" fill="#8ed4f0" stroke="#3c90b8"/>'],
      archicad: [32, 32, '<defs><linearGradient id="a"><stop offset="0" stop-color="#3a1414"/><stop offset=".5" stop-color="#6a3a3a"/><stop offset=".7" stop-color="#e4dedc"/><stop offset="1" stop-color="#8a7a78"/></linearGradient></defs><path d="M0 0h32v32H0z" fill="url(#a)"/><path d="M9 32C10 18 13 10 18 8q5 6 7 24z" fill="#8a4646"/><path d="M2 32C4 18 9 6 15 3q4-1 4 4-6 4-10 25z" fill="#34302c"/><path d="M4 28Q8 8 16 4" stroke="#a8a09c" fill="none"/>'],
      autocad: [32, 32, '<path d="M0 0h32v32H0z" fill="#e65050"/><path d="M0 0h32v14Q16 24 0 15z" fill="#f7c8c0"/><path d="M16 4L27 26h-6l-2-3h-6l-2 3H5z" fill="#b81414"/><path d="M16 4l5 13-9 3z" fill="#e03030"/><path d="M13 20h6l-3-6z" fill="#7a0808"/>'],
      ps: [32, 32, '<path d="M2 1h28v26H2z" fill="#7cc0f8"/><path d="M4 3h24v22H4z" fill="#141a5c"/><text x="16" y="19" font-size="15" font-weight="bold" text-anchor="middle" font-family="Open Sans" fill="#8cccff">Ps</text>'],
      remote: [32, 32, '<path d="M5 3h25v18H5z" fill="#dfe6ec" stroke="#889"/><path d="M7 5h21v14H7z" fill="#1a58b0"/><path d="M20 8h7v10h-7z" fill="#e8c050"/><path d="M15 21h10v5l4 3H14z" fill="#b0b8c0"/><path d="M11 11l12 8-6 12H7L1 20z" fill="#f4f6f8" stroke="#667"/><path d="M8 17l8 7M15 17l-6 7" stroke="#2ca0e8" stroke-width="3"/><path d="M3 16l6-6" stroke="#d02020" stroke-width="2"/>'],
      malware: [32, 32, '<path d="M6 5q5 3 6 10l3 3 3-3q1-7 6-10 7 10 2 17-4 5-11 5-8 0-11-5Q-1 15 6 5z" fill="#2268e0"/><path d="M9 13q0 7 6 9 6-2 6-9-1 3-6 4-5-1-6-4z" fill="#fff"/><path d="M18 18l6-2 6 2q1 9-6 13-7-4-6-13z" fill="#ffd23c" stroke="#445"/><path d="M24 16l-6 2v6h6zM24 24h6q-1 4-6 7z" fill="#2a80d8"/>'],
      outlook: [32, 32, '<path d="M2 5q3-4 8-4h17v28H2z" fill="#ffd48a" stroke="#f09a18" stroke-width="2"/><path d="M6 11h26v17H6z" fill="#fff" stroke="#bbb"/><path d="M4 9l14 10L32 9" fill="none" stroke="#e89020" stroke-width="2"/><circle cx="18" cy="20" r="9.500" fill="#ffc838" stroke="#c88a10"/><path d="M13 18l4 4 6-3" fill="none" stroke="#8a5a08" stroke-width="2"/>'],
      photo: [32, 32, '<path d="M3 5h26v22H3z" fill="#e8f4fc"/><path d="M5 7h22v18H5z" fill="#6cc0f4"/><path d="M5 14q10 3 22 3v2H5z" fill="#3f8a4a"/><path d="M5 19h22v6H5z" fill="#2870a8"/><path d="M2 9V3h7M23 3h7v6M30 22v6h-7M9 28H2v-6" fill="none" stroke="#2a90e0" stroke-width="3"/>'],
      tri: [9, 9, '<path d="M0 7L4.500 2L9 7z" fill="#fff"/>'],
      dropbox: [16, 16, '<path d="M4 1l4 3-4 2.500L0 4zM12 1l4 3-4 2.500L8 4zM4 7l4 2.500L4 12 0 9zM12 7l4 2-4 3-4-2.500z" fill="#fff"/><circle cx="11" cy="11.500" r="4.500" fill="#28a838"/><path d="M9 11.500l2 2 3-4" fill="none" stroke="#fff" stroke-width="1.300"/>'],
      win: [16, 16, '<path d="M1 3l6-1v5.500H1zM8 2l8-1v6.500H8zM1 8.500h6V14l-6-1zM8 8.500h8V15l-8-1z" fill="#fff"/>'],
      flag: [16, 16, '<path d="M2 1v15" stroke="#fff" stroke-width="1.500"/><path d="M3 2q3-1 6 1 3 2 6 0v6q-3 2-6 0-3-2-6 0z" fill="#fff"/>'],
      net: [16, 16, '<path d="M5 4h10v8H5zM7 15h7M10 12v3M1 2v4h4V2M3 6v9h2" fill="none" stroke="#fff" stroke-width="1.500"/>'],
      vol: [16, 16, '<path d="M1 5h3l4-4v14l-4-4H1z" fill="#fff"/><path d="M10 5q2 3 0 6M12 3q4 5 0 10M14 1q5 7 0 14" fill="none" stroke="#fff"/>']
    }

    class Base extends HTMLElement {
      constructor() {
        super()
        this.attachShadow({ mode: 'open' })
      }
      attr(name, fallback = '') {
        return this.getAttribute(name) ?? fallback
      }
      connectedCallback() {
        this.shadowRoot.innerHTML = this.render()
      }
    }

    class Icon extends Base {
      render() {
        const [w, h, body] = icons[this.attr('name')]
        const size = +this.attr('size', 16)
        return `<style>:host { display: inline-block; vertical-align: middle; flex: none; white-space: normal } svg { display: block }</style>
          <svg width="${size}" height="${w > h ? Math.round(size * h / w) : size}" viewBox="0 0 ${w} ${h}">${body}</svg>`
      }
    }

    class Grip extends Base {
      render() {
        return `<style>
          :host { display: block; flex: none; width: ${this.attr('w')}px; height: ${this.attr('h')}px;
            background: conic-gradient(#a0a0a0 25%, #2e2e2e 0 50%, #2e2e2e80 0 75%, transparent 0) 0 0 / 3px 4px; }
        </style>`
      }
    }

    class Menu extends Base {
      render() {
        return `<style>
          :host { display: flex; align-items: center; }
          c4-grip { margin: 0 3px 0 4px; }
          ::slotted(button) { border: 0; padding: 0 7px; background: none; color: #b4b4b4; font: inherit; white-space: nowrap; }
        </style>${this.hasAttribute('grip') ? '<c4-grip w="12" h="12"></c4-grip>' : ''}<slot></slot>`
      }
    }

    class Tools extends Base {
      render() {
        const buttons = this.attr('items').split(' ').map(item => {
          const name = item.replace('*', '')
          return `<button aria-label="${name}" ${item === name ? '' : 'class="on"'}><c4-icon name="${name}" size="32"></c4-icon></button>`
        })
        return `<style>
          :host { display: flex; gap: 1px; flex: none; background: #333; border: 1px solid #2a2a2a; border-radius: 4px; overflow: hidden; }
          :host([column]) { flex-direction: column; }
          button { width: 35px; height: 34px; border: 0; padding: 0; background: linear-gradient(#6e6e6e, #666); }
          :host([column]) button { width: 33px; }
          button.on { background: #8ea8d2; }
        </style>${buttons.join('')}`
      }
    }

    // shared look of a labelled row: optional animation knob, label, control
    const rowStyle = `
      :host { display: flex; align-items: center; height: 18px; }
      .knob { flex: none; width: 14px; height: 14px; margin-right: 4px; box-sizing: border-box; border-radius: 7px; border: 2px solid #747474; background: radial-gradient(circle, #8c8c8c 3px, #2a2a2a 4px, #2a2a2a); }
      label { flex: none; width: var(--lw, auto); font-weight: var(--lb, normal); white-space: nowrap; }
      :host([off]) { opacity: .4; }
    `
    const lead = (el) => (el.hasAttribute('knob') ? '<span class="knob"></span>' : '') +
      (el.attr('label') ? `<label for="c">${el.attr('label')}</label>` : '')

    class Field extends Base {
      render() {
        return `<style>${rowStyle}
          .box { width: var(--fw, 66px); height: 17px; display: flex; align-items: center; box-sizing: border-box; background: #323232; border: 1px solid #2a2a2a; border-right-color: #606060; border-bottom-color: #606060; border-radius: 3px 0 0 0; padding-right: 2px; }
          input { flex: 1; min-width: 0; border: 0; padding: 0 0 0 4px; background: none; color: #b4b4b4; font: inherit; height: 15px; }
        </style>${lead(this)}<span class="box"><input id="c" value="${this.attr('value')}" ${this.attr('label') ? '' : `aria-label="${this.attr('name')}"`}>
        <svg width="5" height="10"><path d="M0 4h5L2.500 0zM0 6h5L2.500 10z" fill="#9a9a9a"/></svg></span>`
      }
    }

    class Combo extends Base {
      render() {
        return `<style>${rowStyle}
          .box { position: relative; flex: 1; min-width: 0; display: flex; }
          select { appearance: none; width: 100%; height: 17px; border: 1px solid #2c2c2c; border-radius: 4px; background: linear-gradient(#747474, #626262); color: #c8c8c8; font: inherit; line-height: 15px; padding: 0 16px 0 var(--cp, 6px); }
          .box::after { content: ""; position: absolute; right: 5px; top: 6px; border: 4px solid transparent; border-top: 5px solid #d0d0d0; border-bottom: 0; pointer-events: none; }
        </style>${lead(this)}<span class="box"><select id="c" ${this.attr('label') ? '' : `aria-label="${this.attr('name')}"`}><option>${this.attr('value')}</option></select></span>`
      }
    }

    class Check extends Base {
      render() {
        return `<style>${rowStyle}
          .box { position: relative; width: 13px; height: 13px; }
          :host([hide]) .box { display: none; }
          input { appearance: none; display: block; box-sizing: border-box; margin: 0; width: 13px; height: 13px; border: 1px solid #333; border-radius: 3px; background: linear-gradient(#777, #606060); }
          input:checked { background: #262626; }
          svg { display: none; position: absolute; left: 1px; top: 0; pointer-events: none; }
          input:checked + svg { display: block; }
        </style>${lead(this)}<span class="box"><input id="c" type="checkbox" ${this.hasAttribute('checked') ? 'checked' : ''} ${this.attr('name') ? `aria-label="${this.attr('name')}"` : ''}>
        <svg width="12" height="12"><path d="M2 6l3 4l6-9" fill="none" stroke="#c8c8c8" stroke-width="2"/></svg></span>`
      }
    }

    class PillButton extends Base {
      render() {
        return `<style>
          :host { display: block; }
          button { width: 100%; height: 18px; display: block; box-sizing: border-box; border: 1px solid #2c2c2c; border-radius: 9px; background: linear-gradient(#747474, #5e5e5e); color: #c8c8c8; font: inherit; line-height: 16px; padding: 0; }
        </style><button><slot></slot></button>`
      }
    }

    // vertical tab rail, items are "Name*height"
    class Rail extends Base {
      render() {
        const tabs = this.attr('items').split(' ').map((item, i) => {
          const [name, h] = item.split('*')
          return `<button style="height: ${h}px" ${i ? '' : 'class="on"'}>${name.replace('_', ' ')}</button>`
        })
        return `<style>
          :host { flex: 0 0 21px; display: flex; flex-direction: column; border-left: 1px solid #2e2e2e; box-sizing: border-box; gap: 1px; padding: 0 2px 0 0; }
          button { writing-mode: vertical-rl; flex: none; border: 0; border-radius: 0 4px 4px 0; padding: 0; background: #353535; color: #747474; font: inherit; line-height: 18px; white-space: nowrap; }
          button.on { background: #6a6a6a; color: #ffaa1c; }
        </style>${tabs.join('')}`
      }
    }

    class TaskButton extends Base {
      render() {
        return `<style>
          :host { display: block; flex: none; }
          button { width: 100%; height: 38px; display: flex; align-items: center; gap: 4px; box-sizing: border-box; padding: 0 0 0 8px; border: 1px solid #c4ccd2; border-radius: 3px; background: linear-gradient(170deg, #ffffff90, #ffffff40 48%, #00000018 50%, #ffffff20); color: #fff; font: inherit; white-space: nowrap; }
          :host([on]) button { background: linear-gradient(170deg, #e4e6e6, #b4babc 48%, #989fa2 50%, #b8c4ce); }
        </style><button><c4-icon name="${this.attr('icon')}" size="32"></c4-icon><slot></slot></button>`
      }
    }

    function fromTemplate(name, id, after) {
      customElements.define(name, class extends HTMLElement {
        constructor() {
          super()
          this.attachShadow({ mode: 'open' }).appendChild(document.getElementById(id).content.cloneNode(true))
          if (after) after(this.shadowRoot)
        }
      })
    }

    // perspective floor: both line families are evenly spaced in 1 / distance from the horizon
    function drawScene(root) {
      const horizon = 129, left = -362, right = 1685
      let lines = ''
      for (let k = -6; k <= 45; k++) {
        const d = 1 / (0.00182 + 0.00027 * k)
        const s = d / (right - 41)
        const op = k % 10 === 0 ? .55 : (k > 25 ? .16 : .2)
        const end = k === 0 ? 570 : 1268
        lines += `<path d="M41 ${horizon + d}L${end} ${horizon + (right - end) * s}" stroke-opacity="${op}"/>`
      }
      for (let k = -5; k <= 42; k++) {
        const p = 0.0031 + 0.00046 * k
        const s = 1 / p / 947
        const op = k % 10 === 0 ? .55 : (k > 18 ? .1 : .2)
        lines += `<path d="M41 ${horizon + (41 - left) * s}L1268 ${horizon + (1268 - left) * s}" stroke-opacity="${op}"/>`
      }
      root.querySelector('svg').innerHTML = `
        <path d="M41 129H1268" stroke="#8f8f8f"/>
        <clipPath id="floor"><path d="M41 200L1268 147V839H41Z"/></clipPath>
        <path d="M41 200L1268 147V185L41 222Z" fill="#000" opacity=".1"/>
        <g clip-path="url(#floor)" stroke="#000">${lines}</g>
        <path d="M494 367L600 345V396Z" fill="#767676"/>
        <path d="M494 367L600 396V621L505 573Z" fill="#bcbcbc"/>
        <g stroke="#333" stroke-opacity=".65"><path d="M501 474L600 518M503 547L600 594M502 523L570 501M527 582L600 553"/></g>
        <path d="M600 345L494 366L505 573L600 621" fill="none" stroke="#d9924a" stroke-width="2"/>
        <path d="M41 108H167V839H41Z" fill="#000" opacity=".04"/>
        <path d="M74 786V802" stroke="#3fd24a"/><path d="M74 802l14-5" stroke="#3a3ae0"/><path d="M74 802l14 5" stroke="#d83a3a" stroke-width="2"/>
        <text x="71" y="784" fill="#3fd24a">Y</text><text x="91" y="802" fill="#3a3ae0">Z</text><text x="91" y="814" fill="#d83a3a">X</text>`
    }

    function drawRuler(root) {
      let out = '<path d="M0 13H1210" stroke="#454545"/><path d="M0 0h9v14H0z" fill="#5fe08c"/>'
      for (let f = 0; f <= 90; f++) {
        const x = 4 + Math.round(f * 12.6)
        out += `<path d="M${x}.500 ${f % 5 ? 17 : 15}V21" stroke="#b4b4b4"/>`
        if (f % 5 === 0) out += `<text x="${f ? x : 13}" y="10" ${f ? '' : 'style="fill: #5fe08c"'}>${f}</text>`
      }
      root.querySelector('.ruler svg').innerHTML = out
    }

    customElements.define('c4-icon', Icon)
    customElements.define('c4-grip', Grip)
    customElements.define('c4-menu', Menu)
    customElements.define('c4-tools', Tools)
    customElements.define('c4-field', Field)
    customElements.define('c4-combo', Combo)
    customElements.define('c4-check', Check)
    customElements.define('c4-button', PillButton)
    customElements.define('c4-rail', Rail)
    customElements.define('task-button', TaskButton)
    fromTemplate('title-bar', 'title-bar')
    fromTemplate('c4-viewport', 'viewport', drawScene)
    fromTemplate('c4-timeline', 'timeline', drawRuler)
    fromTemplate('c4-materials', 'materials')
    fromTemplate('c4-coords', 'coords')
    fromTemplate('c4-objects', 'objects')
    fromTemplate('c4-attributes', 'attributes')
    fromTemplate('render-dialog', 'dialog')
    fromTemplate('task-bar', 'taskbar')
    fromTemplate('c4-desktop', 'desktop')
  </script>
</body>
</html>
